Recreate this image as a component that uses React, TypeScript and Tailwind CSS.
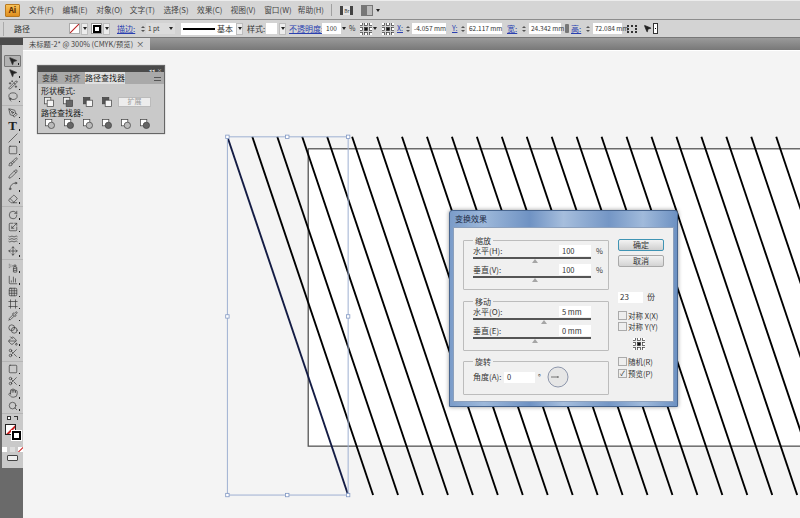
import React from 'react';
import {
  MousePointer2, Wand2, Lasso, PenTool, Slash, Square, Brush, Pencil, Eraser, RotateCw, Scaling, Waves,
  Move, SprayCan, ChartColumn, Grid3x3, Pipette, Blend, PaintBucket, Spline, Frame, Scissors, Hand, Search,
} from 'lucide-react';

const MENU_ITEMS = ['文件(F)', '编辑(E)', '对象(O)', '文字(T)', '选择(S)', '效果(C)', '视图(V)', '窗口(W)', '帮助(H)'];

const Arrow = () => <span className="block w-0 h-0 border-x-[2px] border-x-transparent border-t-[3px] border-t-[#222]" />;

const Spinner = () => (
  <span className="flex flex-col gap-[2px] items-center w-[6px] shrink-0">
    <span className="block w-0 h-0 border-x-[2px] border-x-transparent border-b-[2px] border-b-[#555]" />
    <span className="block w-0 h-0 border-x-[2px] border-x-transparent border-t-[2px] border-t-[#555]" />
  </span>
);

const DropButton = () => (
  <span className="flex items-center justify-center w-[7px] h-[12px] bg-[#ececec] border border-[#bdbdbd] shrink-0">
    <Arrow />
  </span>
);

const ValueBox = ({ value, width }: { value: string; width: string }) => (
  <span className={`flex items-center h-[11px] bg-white px-[2px] text-[6.5px] text-[#333] shrink-0 ${width}`}>{value}</span>
);

const RefPoint = () => (
  <svg width="12" height="12" viewBox="0 0 12 12" className="shrink-0">
    {[1, 6, 11].map((y) => [1, 6, 11].map((x) => (
      <rect key={`${x}-${y}`} x={x - 1.5} y={y - 1.5} width="3" height="3" fill={x === 6 && y === 6 ? '#111' : '#fff'} stroke="#333" strokeWidth="0.7" />
    )))}
  </svg>
);

const TOOL_GROUPS = [
  [MousePointer2, MousePointer2, Wand2, Lasso],
  [PenTool, 'T', Slash, Square, Brush, Pencil, Spline, Eraser],
  [RotateCw, Scaling, Waves, Move],
  [SprayCan, ChartColumn, Grid3x3, Frame, Pipette, Blend, PaintBucket, Scissors],
  [Square, Scissors, Hand, Search],
] as const;

const ToolButton = ({ icon: Icon, active, filled }: { icon: any; active?: boolean; filled?: boolean }) => (
  <div className={`relative flex items-center justify-center h-[12.2px] mx-[2px] ${active ? 'bg-[#b2b2b2] border border-[#777] rounded-[1px]' : ''}`}>
    {typeof Icon === 'string' ? (
      <span className="font-['Liberation_Serif',serif] font-bold text-[13px] leading-none text-[#222]">{Icon}</span>
    ) : (
      <Icon size={10} strokeWidth={1.6} className="text-[#333]" fill={filled ? '#222' : 'none'} />
    )}
    <span className="absolute right-[1px] bottom-[1px] w-[1.5px] h-[1.5px] bg-[#222]" />
  </div>
);

const Toolbar = () => (
  <aside className="flex flex-col w-[23px] shrink-0 bg-[#6a6a6a] pl-[2px]">
    <div className="h-[7px] -ml-[2px] bg-[#4b4b4b]" />
    <div className="flex flex-col bg-[#c9c9c9] pt-[8px] pb-[7px]">
      {TOOL_GROUPS.map((group, gi) => (
        <div key={gi} className="flex flex-col border-b border-[#b5b5b5] py-[1.5px]">
          {group.map((icon, i) => (
            <ToolButton key={i} icon={icon} active={gi === 0 && i === 0} filled={gi === 0 && i < 2} />
          ))}
        </div>
      ))}
      <div className="flex justify-between px-[5px] pt-[2px] h-[7px]">
        <span className="w-[4px] h-[4px] bg-white border border-[#333]" />
        <span className="w-[4px] h-[4px] border-t border-r border-[#333]" />
      </div>
      <div className="relative h-[21px] mt-[3px]">
        <span className="absolute left-[3px] top-0 w-[11px] h-[11px] bg-white border border-[#222] overflow-hidden">
          <span className="absolute left-[4px] -top-[2px] w-[1.5px] h-[15px] bg-[#c22] rotate-45" />
        </span>
        <span className="absolute left-[9px] top-[6px] w-[11px] h-[11px] bg-black border border-white flex items-center justify-center">
          <span className="w-[5px] h-[5px] bg-white" />
        </span>
      </div>
      <div className="flex justify-center gap-[3px] mt-[2px]">
        <span className="w-[5px] h-[5px] bg-white" />
        <span className="w-[5px] h-[5px] bg-[#ddd]" />
        <span className="w-[5px] h-[5px] bg-white relative overflow-hidden">
          <span className="absolute left-[2px] -top-[1px] w-[1px] h-[8px] bg-[#c22] rotate-45" />
        </span>
      </div>
      <div className="flex justify-center pt-[3px]">
        <span className="w-[11px] h-[6px] border border-[#444] bg-[#eee] rounded-[1px]" />
      </div>
    </div>
  </aside>
);

const MenuBar = () => (
  <header className="flex items-center h-[20px] bg-[#d5d5d5] border-t border-[#ededed] border-b border-b-[#8d8d8d] shrink-0">
    <div className="flex items-center justify-center w-[15px] h-[13px] ml-[5px] mr-[9px] rounded-[1px] bg-[linear-gradient(#f7c25a,#e08e1d)] border border-[#b8781e] text-[8px] font-bold text-[#5a2c00] leading-none">
      Ai
    </div>
    {MENU_ITEMS.map((label) => (
      <span key={label} className="w-[33.6px] shrink-0 text-[7.7px] text-[#444] whitespace-nowrap">{label}</span>
    ))}
    <span className="w-px h-[12px] bg-[#a0a0a0] ml-[0px]" />
    <span className="ml-[8px] w-[13px] h-[9px] bg-[#e6e6e6] border-x-[3px] border-[#444] flex items-center justify-center text-[5px] text-[#333] leading-none">Br</span>
    <span className="ml-[8px] w-[12px] h-[11px] bg-[linear-gradient(90deg,#777_50%,#bbb_50%)] border border-[#777]" />
    <span className="ml-[3px]"><Arrow /></span>
  </header>
);

const ControlBar = () => (
  <div className="flex items-center h-[18px] bg-[#d3d3d3] border-b border-[#777] text-[8px] text-[#333] shrink-0 whitespace-nowrap">
    <span className="w-px h-[14px] bg-[#aaa] ml-[3px]" />
    <span className="ml-[10px] w-[55px]">路径</span>
    <svg width="11" height="11" viewBox="0 0 11 11" className="shrink-0 bg-white border border-[#aaa]">
      <line x1="0" y1="11" x2="11" y2="0" stroke="#b22" strokeWidth="1.3" />
    </svg>
    <span className="ml-[1px]"><DropButton /></span>
    <span className="ml-[3px] flex items-center justify-center w-[11px] h-[11px] bg-white border border-[#999] shrink-0">
      <span className="w-[8px] h-[8px] border-[2px] border-black" />
    </span>
    <span className="ml-[1px]"><DropButton /></span>
    <span className="ml-[7px] text-[#2a3fb0] underline w-[19px]">描边:</span>
    <span className="ml-[4px]"><Spinner /></span>
    <span className="flex items-center justify-between w-[29px] h-[11px] bg-[#dcdcdc] pl-[2px] pr-[2px] text-[6.5px]">
      1 pt <Arrow />
    </span>
    <span className="ml-[6px] flex items-center w-[55px] h-[12px] bg-white pl-[2px] shrink-0">
      <span className="w-[32px] h-[2px] bg-black" />
      <span className="ml-[2px] text-[8px]">基本</span>
    </span>
    <DropButton />
    <span className="ml-[4px] w-[19px]">样式:</span>
    <span className="w-[11px] h-[11px] bg-white shrink-0" />
    <span className="ml-[2px]"><DropButton /></span>
    <span className="ml-[3px] text-[#2a3fb0] underline w-[33px]">不透明度:</span>
    <ValueBox value="100" width="w-[19px] justify-center" />
    <span className="ml-[1px]"><Arrow /></span>
    <span className="ml-[3px] text-[7px] w-[11px]">%</span>
    <RefPoint />
    <span className="ml-[1px] mr-[5px]"><Arrow /></span>
    <RefPoint />
    <span className="ml-[3px] text-[#2a3fb0] underline w-[8px] text-[7px]">X:</span>
    <Spinner />
    <ValueBox value="-4.057 mm" width="ml-[1px] w-[34px]" />
    <span className="ml-[6px] text-[#2a3fb0] underline w-[8px] text-[7px]">Y:</span>
    <Spinner />
    <ValueBox value="62.117 mm" width="ml-[1px] w-[35px]" />
    <span className="ml-[5px] text-[#2a3fb0] underline w-[12px]">宽:</span>
    <span className="ml-[2px]"><Spinner /></span>
    <ValueBox value="24.342 mm" width="ml-[2px] w-[32px]" />
    <span className="ml-[4px] w-[4px] h-[9px] bg-[#777] rounded-[1px] shrink-0" />
    <span className="ml-[2px] text-[#2a3fb0] underline w-[12px]">高:</span>
    <span className="ml-[2px]"><Spinner /></span>
    <ValueBox value="72.084 mm" width="ml-[2px] w-[29px]" />
    <span className="ml-[5px] w-[10px] h-[8px] border-2 border-dotted border-[#333] shrink-0" />
    <MousePointer2 size={9} className="ml-[6px] text-[#222] shrink-0" fill="#222" />
    <span className="ml-[1px] flex items-center justify-center w-[5px] h-[11px] bg-white border border-[#333]">
      <span className="w-[1.5px] h-[1.5px] bg-black" />
    </span>
  </div>
);

const TabBar = () => (
  <div className="flex items-end h-[12px] bg-[linear-gradient(#9a9a9a,#787878)] shrink-0">
    <div className="flex items-center gap-[3px] h-full bg-[#dcdcdc] px-[6px] text-[7.3px] text-[#444] whitespace-nowrap">
      未标题-2* @ 300% (CMYK/预览)
      <span className="text-[8px] leading-none">×</span>
    </div>
  </div>
);

const Artwork = () => {
  const copies = Array.from({ length: 23 }, (_, i) => i);
  const handles = [[227, 136], [287, 136], [348, 136], [227, 316], [348, 316], [227, 495], [287, 495], [348, 495]];
  return (
    <svg className="absolute inset-0 w-full h-full" viewBox="23 50 777 468">
      <rect x="308" y="148" width="600" height="298" fill="#fff" stroke="#555" strokeWidth="1.3" />
      {copies.map((i) => (
        <line
          key={i}
          x1={227 + i * 25}
          y1="136"
          x2={348 + i * 25}
          y2="495"
          stroke={i === 0 ? '#141c44' : '#000'}
          strokeWidth="1.9"
        />
      ))}
      <rect x="227" y="136" width="121" height="359" fill="none" stroke="#9eb0d2" strokeWidth="1" />
      {handles.map(([x, y]) => (
        <rect key={`${x}-${y}`} x={x - 1.7} y={y - 1.7} width="3.4" height="3.4" fill="#fff" stroke="#8198c4" strokeWidth="0.8" />
      ))}
    </svg>
  );
};

const ShapeIcon = ({ kind }: { kind: number }) => (
  <svg width="10" height="10" viewBox="0 0 11 11">
    {kind < 4 ? (
      <>
        <rect x="0.5" y="0.5" width="7" height="7" fill={kind > 1 ? '#555' : '#eee'} stroke="#444" strokeWidth="0.8" />
        <rect x="3.5" y="3.5" width="7" height="7" fill={kind === 1 ? '#666' : '#f4f4f4'} stroke="#444" strokeWidth="0.8" />
      </>
    ) : (
      <>
        <rect x="0.5" y="0.5" width="7" height="7" fill="#fff" stroke="#444" strokeWidth="0.8" />
        <circle cx="7" cy="7" r="3.5" fill={kind === 5 ? '#666' : '#bbb'} stroke="#444" strokeWidth="0.8" />
      </>
    )}
  </svg>
);

const PathfinderPanel = () => (
  <div className="absolute left-[14px] top-[14px] w-[128px] h-[69px] bg-[#c9c9c9] border border-[#666] shadow-[0_0_1px_#888] text-[8px] text-[#222]">
    <div className="flex justify-end items-center gap-[2px] h-[6px] pr-[2px] bg-[#4a4a4a]">
      <span className="text-[5px] leading-none text-[#ddd]">◂◂</span>
      <span className="text-[5px] leading-none text-[#ddd]">×</span>
    </div>
    <div className="flex items-end h-[12px] bg-[#a9a9a9] pl-[2px]">
      <span className="w-[20px] text-center text-[#333]">变换</span>
      <span className="w-[25px] text-center text-[#333]">对齐</span>
      <span className="w-[40px] h-full bg-[#e0e0e0] text-center leading-[12px]">路径查找器</span>
      <span className="ml-auto mr-[3px] mb-[3px] w-[7px] h-[4px] border-y border-[#555]" />
    </div>
    <div className="pl-[3px] pt-[1px] leading-[11px]">形状模式:</div>
    <div className="flex items-center pl-[6px] h-[11px]">
      <span className="w-[19px]"><ShapeIcon kind={0} /></span>
      <span className="w-[20px]"><ShapeIcon kind={1} /></span>
      <span className="w-[19px]"><ShapeIcon kind={2} /></span>
      <span className="w-[16px]"><ShapeIcon kind={3} /></span>
      <span className="flex items-center justify-center w-[33px] h-[10px] bg-[#ededed] border border-[#bbb] text-[7px] text-[#999]">扩展</span>
    </div>
    <div className="pl-[3px] leading-[11px]">路径查找器:</div>
    <div className="flex items-center pl-[7px] h-[12px] gap-[9px]">
      {[4, 5, 4, 5, 4, 5].map((kind, i) => <ShapeIcon key={i} kind={kind} />)}
    </div>
  </div>
);

const GroupBox = ({ title, className, children }: { title: string; className: string; children: React.ReactNode }) => (
  <fieldset className={`border border-[#bcbcbc] rounded-[1px] pl-[9px] pr-[3px] ${className}`}>
    <legend className="px-[2px] text-[8px] leading-[9px]">{title}</legend>
    {children}
  </fieldset>
);

const SliderRow = ({ label, value, unit, thumb }: { label: string; value: string; unit?: string; thumb: string }) => (
  <div className="flex flex-col">
    <div className="flex items-center h-[11px]">
      <span className="w-[86px] text-[8px]">{label}</span>
      <span className="flex items-center w-[32px] h-[11px] bg-white pl-[3px] text-[7.5px] shrink-0">{value}</span>
      {unit && <span className="ml-[5px] text-[7.5px]">{unit}</span>}
    </div>
    <div className="relative mt-[1px] h-[7px] w-[118px]">
      <div className="h-[1.5px] bg-[#555]" />
      <span className={`absolute top-[2px] w-0 h-0 border-x-[3px] border-x-transparent border-b-[4px] border-b-[#a5a5a5] ${thumb}`} />
    </div>
  </div>
);

const Check = ({ label, checked }: { label: string; checked?: boolean }) => (
  <label className="flex items-center gap-[1px] h-[11px] text-[7.5px] whitespace-nowrap">
    <span className="flex items-center justify-center w-[9px] h-[9px] bg-[#eee] border border-[#aaa] text-[7px] leading-none">{checked ? '✓' : ''}</span>
    {label}
  </label>
);

const TransformDialog = () => (
  <div className="absolute left-[426px] top-[159px] w-[229px] h-[197px] rounded-t-[3px] border border-[#47658f] shadow-[0_0_4px_rgba(0,0,0,0.4)] px-[3px] pb-[4px] flex flex-col bg-[linear-gradient(90deg,#7b9cc9,#9db8da_15%,#6f92c3_35%,#a6bedd_50%,#7496c5_70%,#a0badb_85%,#6d91c2)]">
    <div className="h-[16px] shrink-0 flex items-center pl-[2px] text-[8px] text-[#1c2a44]">变换效果</div>
    <div className="flex-1 flex bg-[#f0f0f0] border border-[#8ca0bc] pl-[9px] text-[#333]">
      <div className="flex flex-col w-[146px] pt-[8px] shrink-0">
        <GroupBox title="缩放" className="h-[54px]">
          <SliderRow label="水平(H):" value="100" unit="%" thumb="left-[59px]" />
          <SliderRow label="垂直(V):" value="100" unit="%" thumb="left-[59px]" />
        </GroupBox>
        <GroupBox title="移动" className="h-[54px] mt-[7px]">
          <SliderRow label="水平(O):" value="5 mm" thumb="left-[68px]" />
          <SliderRow label="垂直(E):" value="0 mm" thumb="left-[59px]" />
        </GroupBox>
        <GroupBox title="旋转" className="h-[38px] mt-[6px]">
          <div className="flex items-center">
            <span className="w-[31px] text-[8px] whitespace-nowrap">角度(A):</span>
            <span className="flex items-center w-[31px] h-[11px] bg-white pl-[3px] text-[7.5px]">0</span>
            <span className="ml-[3px] text-[7.5px]">°</span>
            <svg width="22" height="22" viewBox="0 0 22 22" className="ml-[6px]">
              <circle cx="11" cy="11" r="10" fill="#e6e6e6" stroke="#8d96ab" strokeWidth="1" />
              <line x1="4" y1="11" x2="11" y2="11" stroke="#555" strokeWidth="0.8" />
              <circle cx="11" cy="11" r="0.8" fill="#555" />
            </svg>
          </div>
        </GroupBox>
      </div>
      <div className="flex flex-col pl-[9px] pt-[11px]">
        <button className="w-[46px] h-[12px] rounded-[2px] border border-[#3f94b4] bg-[linear-gradient(#f3f3f3,#cfcfcf)] text-[8px] leading-none">确定</button>
        <button className="mt-[4px] w-[46px] h-[12px] rounded-[2px] border border-[#a9a9a9] bg-[linear-gradient(#f3f3f3,#d3d3d3)] text-[8px] leading-none">取消</button>
        <div className="flex items-center mt-[24px] text-[8px]">
          <span className="flex items-center w-[25px] h-[11px] bg-white pl-[2px]">23</span>
          <span className="ml-[4px]">份</span>
        </div>
        <div className="mt-[7px] flex flex-col">
          <Check label="对称 X(X)" />
          <Check label="对称 Y(Y)" />
        </div>
        <div className="mt-[6px] pl-[15px]"><RefPoint /></div>
        <div className="mt-[6px] flex flex-col gap-[1px]">
          <Check label="随机(R)" />
          <Check label="预览(P)" checked />
        </div>
      </div>
    </div>
  </div>
);

export default function App() {
  return (
    <div className="flex flex-col w-[800px] h-[518px] overflow-hidden font-['Noto_Sans_CJK_SC','Noto_Sans',sans-serif] bg-[#f4f4f4]">
      <MenuBar />
      <ControlBar />
      <div className="flex flex-1 min-h-0">
        <Toolbar />
        <div className="flex flex-col flex-1 min-w-0">
          <TabBar />
          <main className="relative flex-1 bg-[#f4f4f4] border-t border-white overflow-hidden">
            <Artwork />
            <PathfinderPanel />
            <TransformDialog />
          </main>
        </div>
      </div>
    </div>
  );
}
